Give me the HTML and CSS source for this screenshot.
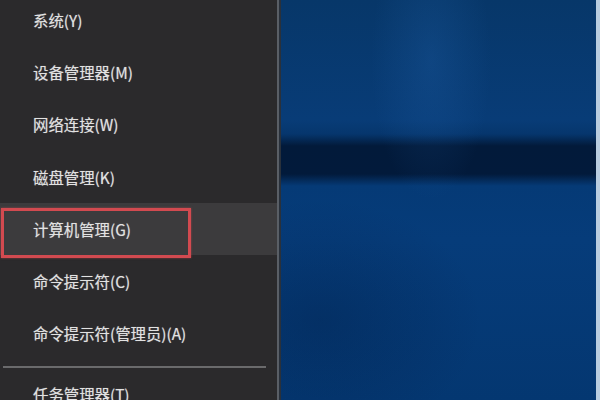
FILE: index.html
```html
<!DOCTYPE html>
<html lang="zh-CN">
<head>
<meta charset="utf-8">
<link rel="stylesheet" href="styles.css">
</head>
<body>
<div class="screen">
  <div class="menu">
    <ul class="items">
      <li class="item">系统(Y)</li>
      <li class="item">设备管理器(M)</li>
      <li class="item">网络连接(W)</li>
      <li class="item">磁盘管理(K)</li>
      <li class="item item-active">计算机管理(G)<span class="mark"></span></li>
      <li class="item">命令提示符(C)</li>
      <li class="item">命令提示符(管理员)(A)</li>
    </ul>
    <div class="sep"></div>
    <ul class="items">
      <li class="item">任务管理器(T)</li>
    </ul>
  </div>
  <div class="edge"></div>
  <div class="desktop"></div>
  <div class="rim"></div>
</div>
</body>
</html>
```

FILE: styles.css
```css
* { box-sizing: border-box; }
html, body { margin: 0; padding: 0; }
body {
  width: 600px;
  height: 400px;
  overflow: hidden;
  background: #2b2a2c;
  font-family: "Noto Sans CJK SC", "Noto Sans", sans-serif;
}
.screen {
  display: flex;
  width: 600px;
  height: 400px;
  overflow: hidden;
}
.menu {
  width: 277px;
  flex: none;
  background: #2b2a2c;
  overflow: hidden;
}
.items {
  list-style: none;
  margin: 0;
  padding: 0;
}
.menu > .items:first-child { margin-top: -6px; }
.item {
  position: relative;
  height: 52.17px;
  display: flex;
  align-items: center;
  padding-left: 33px;
  color: #e2e2e2;
  font-size: 15.4px;
  white-space: nowrap;
  text-shadow: 0 0 1px rgba(230,230,230,0.5);
}
.item-active { background: #3c3b3d; }
.mark {
  position: absolute;
  left: 1px;
  top: 5px;
  width: 190px;
  height: 50px;
  border: 3px solid #d24a50;
  box-shadow: 0 0 2px rgba(210,74,80,0.6);
}
.sep {
  margin: 7px 11px 0 3px;
  height: 2px;
  background: #6a6a6c;
}
.edge {
  width: 4px;
  flex: none;
  background: linear-gradient(to right, #5a5f66 0, #5a5f66 2px, #2a313b 2px);
}
.desktop {
  flex: 1;
  background:
    radial-gradient(ellipse 60px 140px at 150px 60px, rgba(40,110,190,0.22), transparent),
    radial-gradient(ellipse 160px 120px at 40px 320px, rgba(2,30,70,0.35), transparent),
    linear-gradient(to bottom, #073769 0, #083c77 120px, #06366d 134px, #021a3a 146px, #021a3b 174px, #053a76 186px, #063c7a 240px, #043771 400px);
}
.rim {
  width: 4px;
  flex: none;
  background: #b9cde0;
}
```
